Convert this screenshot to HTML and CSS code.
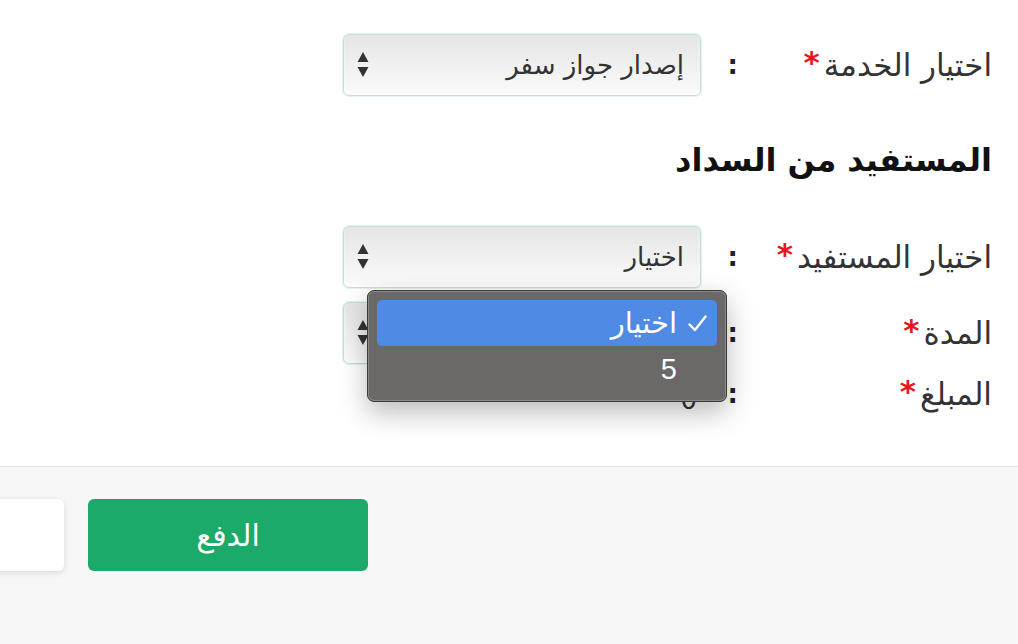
FILE: index.html
```html
<!DOCTYPE html>
<html lang="ar" dir="rtl">
<head>
<meta charset="utf-8">
<title>الدفع</title>
<link rel="stylesheet" href="styles.css">
</head>
<body>
<main class="form-body">
  <div class="form-row">
    <label class="field-label">اختيار الخدمة<span class="req">*</span></label>
    <span class="colon">:</span>
    <div class="select-box">
      <span class="select-value">إصدار جواز سفر</span>
      <svg class="select-arrows" width="12" height="26" viewBox="0 0 12 26"><path d="M6 0 L11.5 10 H0.5 Z M0.5 15 H11.5 L6 25 Z" fill="#333"/></svg>
    </div>
  </div>

  <h2 class="section-title">المستفيد من السداد</h2>

  <div class="form-row">
    <label class="field-label">اختيار المستفيد<span class="req">*</span></label>
    <span class="colon">:</span>
    <div class="select-box open">
      <span class="select-value">اختيار</span>
      <svg class="select-arrows" width="12" height="26" viewBox="0 0 12 26"><path d="M6 0 L11.5 10 H0.5 Z M0.5 15 H11.5 L6 25 Z" fill="#333"/></svg>
      <ul class="popup-menu">
        <li class="menu-item selected">
          <span class="check"><svg width="19" height="17" viewBox="0 0 19 17"><path d="M1.5 9.5 L7 15 L17.5 1.5" fill="none" stroke="#fff" stroke-width="2.4" stroke-linecap="round" stroke-linejoin="round"/></svg></span>
          <span>اختيار</span>
        </li>
        <li class="menu-item"><span class="check"></span><span>5</span></li>
      </ul>
    </div>
  </div>

  <div class="form-row">
    <label class="field-label">المدة<span class="req">*</span></label>
    <span class="colon">:</span>
    <div class="select-box">
      <span class="select-value"></span>
      <svg class="select-arrows" width="12" height="26" viewBox="0 0 12 26"><path d="M6 0 L11.5 10 H0.5 Z M0.5 15 H11.5 L6 25 Z" fill="#333"/></svg>
    </div>
  </div>

  <div class="form-row short">
    <label class="field-label">المبلغ<span class="req">*</span></label>
    <span class="colon">:</span>
    <span class="plain-value">0</span>
  </div>
</main>

<footer class="form-footer">
  <div class="actions">
    <button class="btn btn-pay">الدفع</button>
    <button class="btn btn-cancel"></button>
  </div>
</footer>
</body>
</html>
```

FILE: styles.css
```css
* { box-sizing: border-box; }

html, body {
  margin: 0;
  padding: 0;
  background: #fff;
  overflow: hidden;
}

body {
  font-family: "DejaVu Sans", sans-serif;
  color: #333;
  width: 1018px;
  height: 644px;
}

.form-body {
  padding: 34px 26px 50px 0;
  border-bottom: 1px solid #e4e4e4;
}

.form-row {
  display: grid;
  grid-template-columns: 244px 47px 358px;
  align-items: center;
  height: 62px;
  margin-bottom: 14px;
}

.form-row.short {
  height: 44px;
  margin-top: -6px;
  margin-bottom: 0;
}

.field-label {
  font-size: 31px;
  color: #333;
  white-space: nowrap;
}

.req {
  color: #e8151d;
  font-weight: bold;
  margin-right: 4px;
  position: relative;
  top: -3px;
}

.colon {
  font-size: 26px;
  font-weight: bold;
  padding-right: 10px;
  color: #222;
}

.select-box {
  position: relative;
  height: 62px;
  border: 1px solid #bfe2d6;
  border-radius: 6px;
  box-shadow: 0 0 0 1px #e3f2ec, inset 0 -2px 3px rgba(255,255,255,0.9);
  background: linear-gradient(#e5e5e5, #f1f1f1 55%, #fbfbfb);
  display: flex;
  align-items: center;
  justify-content: space-between;
  padding: 0 16px 0 13px;
}

.select-value {
  font-size: 26px;
  color: #333;
}

.select-arrows { display: block; }

.plain-value {
  font-size: 26px;
  padding-right: 4px;
  padding-top: 12px;
}

.section-title {
  margin: 44px 0 46px;
  font-size: 32px;
  line-height: 40px;
  font-weight: bold;
  color: #111;
}

/* native-style option popup opened under the beneficiary select */
.popup-menu {
  position: absolute;
  top: 63px;
  right: -27px;
  width: 360px;
  height: 112px;
  margin: 0;
  padding: 9px;
  list-style: none;
  background: #6a6967;
  border: 1px solid #3b3b3b;
  border-radius: 7px;
  box-shadow: inset 0 0 0 1px #8a8987, 0 10px 28px rgba(0,0,0,0.28);
  z-index: 5;
  font-family: "Liberation Sans", "DejaVu Sans", sans-serif;
}

.menu-item {
  display: flex;
  align-items: center;
  height: 46px;
  border-radius: 5px;
  color: #fff;
  font-size: 29px;
  padding-right: 10px;
}

.menu-item.selected {
  background: #4f8be5;
}

.menu-item .check {
  width: 30px;
  display: flex;
  align-items: center;
}

.form-footer {
  background: #f7f7f7;
  height: 177px;
  padding-top: 32px;
}

.actions {
  display: flex;
  justify-content: flex-end;
  gap: 24px;
  margin-left: -136px;
  padding: 0;
}

.btn {
  height: 72px;
  border: 0;
  border-radius: 6px;
  font-family: "DejaVu Sans", sans-serif;
  font-size: 30px;
}

.btn-pay {
  width: 280px;
  background: #1caa6a;
  color: #fff;
}

.btn-cancel {
  width: 200px;
  background: #fff;
  box-shadow: 0 2px 6px rgba(0,0,0,0.12);
}
```
